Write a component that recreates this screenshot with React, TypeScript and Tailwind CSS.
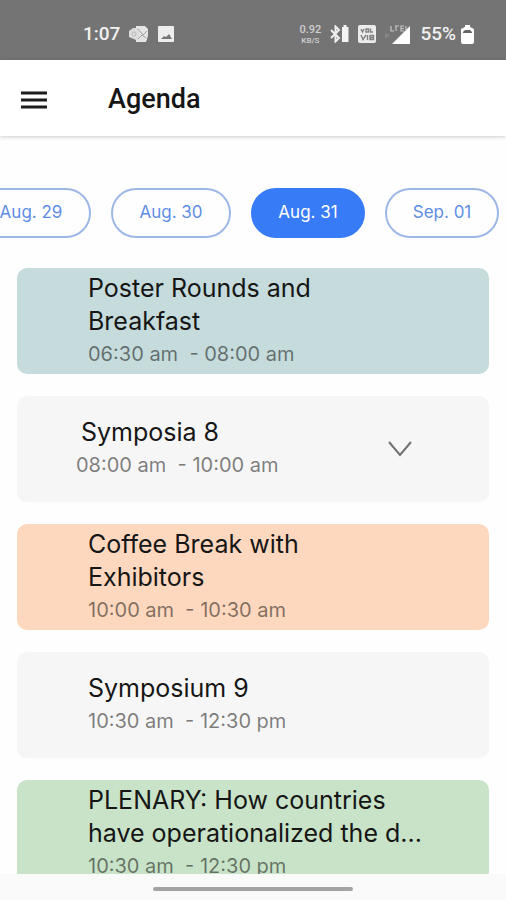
import React from "react";

type Session = {
  title: string;
  start: string;
  end: string;
  tone: string;
  expandable?: boolean;
};

const days = [
  { label: "Aug. 29", width: "w-[120px]" },
  { label: "Aug. 30", width: "w-[120px]" },
  { label: "Aug. 31", width: "w-[114px]", active: true },
  { label: "Sep. 01", width: "w-[114px]" },
];

const sessions: Session[] = [
  { title: "Poster Rounds and\nBreakfast", start: "06:30 am", end: "08:00 am", tone: "bg-[#c6dbdb]" },
  { title: "Symposia 8", start: "08:00 am", end: "10:00 am", tone: "bg-[#f6f6f6]", expandable: true },
  { title: "Coffee Break with\nExhibitors", start: "10:00 am", end: "10:30 am", tone: "bg-[#fed8be]" },
  { title: "Symposium 9", start: "10:30 am", end: "12:30 pm", tone: "bg-[#f6f6f6]" },
  {
    title: "PLENARY: How countries\nhave operationalized the d...",
    start: "10:30 am",
    end: "12:30 pm",
    tone: "bg-[#c9e3c8]",
  },
];

function OutlookIcon() {
  return (
    <svg viewBox="0 0 20 16" className="h-4 w-5" aria-hidden="true">
      <path d="M7 0h9l3 3v7l-2 6H7z" fill="#e4e4e4" />
      <path d="M0 5l4-3h6v11l-3 1-7-3z" fill="#dcdcdc" />
      <circle cx="5" cy="8" r="2" fill="none" stroke="#bbb" strokeWidth="1" />
      <path d="M9 3l5 6 4-4M9 13l4-4 4 3" fill="none" stroke="#a2a2a2" strokeWidth="1" />
    </svg>
  );
}

function PhotoIcon() {
  return (
    <svg viewBox="0 0 16 16" className="size-4" aria-hidden="true">
      <rect width="16" height="16" rx="1" fill="#ededed" />
      <path d="M3 13l3-3 2 1 3-3 3 5z" fill="#777" />
    </svg>
  );
}

function BluetoothIcon() {
  return (
    <svg viewBox="0 0 19 18" className="h-[18px] w-[19px]" aria-hidden="true">
      <path d="M1 5l8 8-3.500 3.500v-15L9 5l-8 8" fill="none" stroke="#f0f0f0" strokeWidth="2" />
      <path d="M13.500 0h3v2h2v15H12V2h1.500z" fill="#f4f4f4" />
    </svg>
  );
}

function VolteIcon() {
  return (
    <svg viewBox="0 0 18 18" className="size-[18px]" aria-hidden="true">
      <rect width="18" height="18" rx="2" fill="#ececec" />
      <path
        d="M3 4l1.500 3L6 4M8 4h2.500v3H8zM12.500 3.500V7H15M3 10l2 4.500L8 10M9.500 10v5M12 10.500h3.500v4H12zM12 12.500h3"
        fill="none"
        stroke="#808080"
        strokeWidth="1.400"
      />
    </svg>
  );
}

function SignalIcon() {
  return (
    <svg viewBox="0 0 26 19" className="h-[19px] w-[26px]" aria-hidden="true">
      <path d="M25 1v18H7z" fill="#fff" />
      <path d="M6 1v5h3M11 1v5M10 1h4M19 1h-3v5h3M16 3.500h3M21 1v4" fill="none" stroke="#c4c4c4" strokeWidth="1.200" />
      <path d="M1 8v5M3 9v3" stroke="#949494" strokeWidth="1" />
    </svg>
  );
}

function BatteryIcon() {
  return (
    <svg viewBox="0 0 13 19" className="h-[19px] w-[13px]" aria-hidden="true">
      <path d="M4 0h5v2l4 2v13a2 2 0 0 1-2 2H2a2 2 0 0 1-2-2V4l4-2z" fill="#fff" />
      <path d="M2 8V7l2-2h5l2 2v1z" fill="#666" />
    </svg>
  );
}

function StatusBar() {
  return (
    <div className="flex h-[60px] shrink-0 items-center justify-between bg-[#747474] pt-2 pr-8 pl-[83px] font-['Roboto',sans-serif] text-[19px] font-medium text-[#f0f0f0]">
      <div className="flex items-center gap-[9px]">
        <span>1:07</span>
        <OutlookIcon />
        <PhotoIcon />
      </div>
      <div className="flex items-center gap-[9px]">
        <span className="flex w-[22px] flex-col text-center text-[#d0d0d0]">
          <span className="text-[11px] leading-[13px]">0.92</span>
          <span className="text-[8px] leading-[10px]">KB/S</span>
        </span>
        <BluetoothIcon />
        <VolteIcon />
        <SignalIcon />
        <span className="flex items-center gap-[5px]">
          55%
          <BatteryIcon />
        </span>
      </div>
    </div>
  );
}

function SessionCard({ title, start, end, tone, expandable }: Session) {
  return (
    <li className={`flex h-[106px] shrink-0 items-center rounded-[10px] ${expandable ? "pr-[73px]" : "pr-4"} ${tone}`}>
      <div className={`min-w-0 flex-1 ${expandable ? "pl-[59px]" : "pl-[71px]"}`}>
        <h2 className={`text-[25px] leading-[33px] whitespace-pre-line text-[#161616] ${expandable ? "pl-[5px]" : ""}`}>
          {title}
        </h2>
        <p className="text-[20px] leading-[33px] whitespace-pre text-black/50">{`${start}  - ${end}`}</p>
      </div>
      {expandable && (
        <button type="button" aria-label={`Expand ${title}`} className="flex h-8 w-8 items-center justify-center">
          <svg viewBox="0 0 24 16" className="h-4 w-6" fill="none" stroke="#707070" strokeWidth="2" aria-hidden="true">
            <path d="M1 1l11 13L23 1" />
          </svg>
        </button>
      )}
    </li>
  );
}

export default function App() {
  return (
    <div className="flex h-screen flex-col overflow-hidden bg-[#fefefe] font-['Inter',sans-serif]">
      <StatusBar />
      <header className="flex h-[76px] shrink-0 items-center gap-[61px] bg-white pt-[3px] pl-[21px] shadow-[0_1px_4px_rgba(0,0,0,0.2)]">
        <button type="button" aria-label="Open menu" className="h-[18px] w-[26px]">
          <svg viewBox="0 0 26 18" className="h-[18px] w-[26px]" stroke="#1c1c1c" strokeWidth="3" aria-hidden="true">
            <path d="M0 2h26M0 9h26M0 16h26" />
          </svg>
        </button>
        <h1 className="font-['Roboto',sans-serif] text-[27px] font-medium text-[#161616]">Agenda</h1>
      </header>
      <nav aria-label="Days" className="mt-[52px] flex shrink-0 justify-end gap-5 overflow-hidden pr-[7px]">
        {days.map((day) => (
          <button
            key={day.label}
            type="button"
            aria-pressed={!!day.active}
            className={`h-[50px] shrink-0 rounded-full border-2 text-[17px] ${day.width} ${
              day.active ? "border-[#387bf7] bg-[#387bf7] text-white" : "border-[#9db8e6] text-[#5f8ee6]"
            }`}
          >
            {day.label}
          </button>
        ))}
      </nav>
      <main className="mt-[30px] min-h-0 flex-1 overflow-hidden px-[17px]">
        <ul className="flex flex-col gap-[22px]">
          {sessions.map((session) => (
            <SessionCard key={session.title} {...session} />
          ))}
        </ul>
      </main>
      <footer className="flex h-[26px] shrink-0 items-center justify-center bg-[#fafafa] pt-1">
        <div className="h-1 w-[200px] rounded-full bg-[#a3a3a3]" />
      </footer>
    </div>
  );
}
